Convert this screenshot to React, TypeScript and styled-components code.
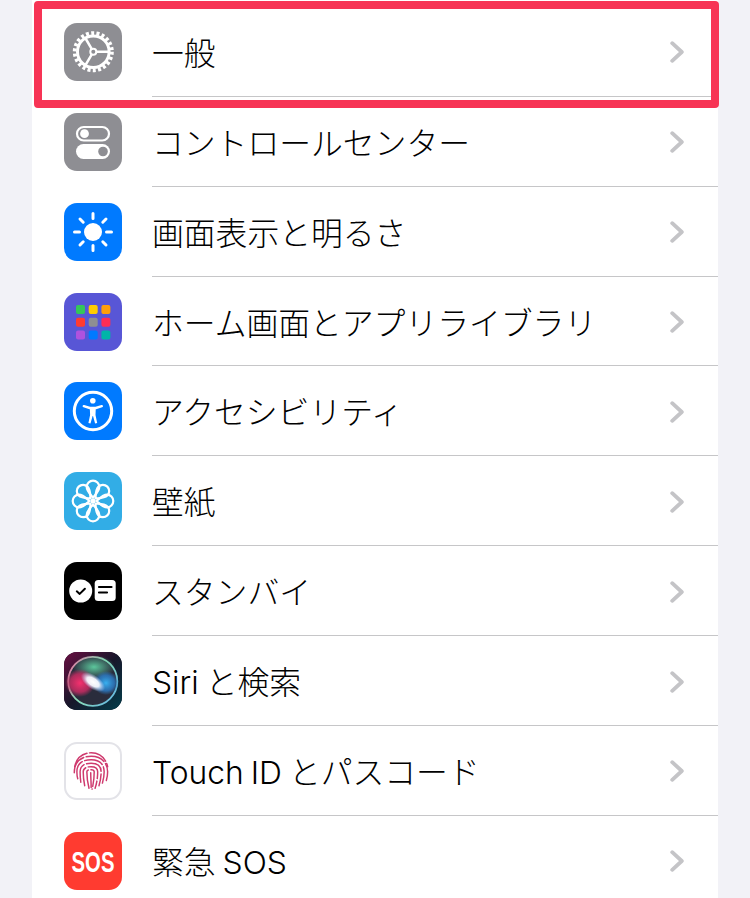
import React from "react";
import styled, { createGlobalStyle } from "styled-components";

const GlobalStyle = createGlobalStyle`
    html, body {
        margin: 0;
        padding: 0;
        background-color: #f2f2f7;
    }
    body {
        overflow: hidden;
    }
`;

const Page = styled.div`
    position: relative;
    width: 750px;
    height: 898px;
    padding: 0 32px;
    box-sizing: border-box;
    overflow: hidden;
    background-color: #f2f2f7;
`;

const Card = styled.div`
    display: flex;
    flex-direction: column;
    padding-top: 6.96px;
    background-color: #ffffff;
`;

const Row = styled.div`
    display: flex;
    flex: 0 0 auto;
    align-items: center;
    height: 89.88px;
    padding-left: 32px;
    box-sizing: border-box;
`;

const IconBox = styled.div<{ $bg: string; $bordered?: boolean }>`
    flex: 0 0 auto;
    width: 58px;
    height: 58px;
    border-radius: 13px;
    overflow: hidden;
    box-sizing: border-box;
    background: ${({ $bg }) => $bg};
    border: ${({ $bordered }) => ($bordered ? "2px solid #e3e3e8" : "none")};

    svg {
        display: block;
        width: 100%;
        height: 100%;
    }
`;

const RowBody = styled.div`
    flex: 1;
    display: flex;
    align-items: center;
    justify-content: space-between;
    align-self: stretch;
    margin-left: 30px;
    padding-right: 34px;
    border-bottom: 1px solid #c6c6c8;
`;

const Label = styled.span`
    padding-top: 5px;
    font-family: "Inter", "Noto Sans CJK JP", sans-serif;
    font-size: 31.8px;
    font-weight: 300;
    line-height: 1;
    word-spacing: -2px;
    color: #000000;
    white-space: nowrap;
`;

const Chevron = styled.svg`
    display: block;
    width: 14px;
    height: 22px;
    margin-top: 2px;
    fill: none;
    stroke: #c4c4c7;
    stroke-width: 3.8;
    stroke-linecap: round;
    stroke-linejoin: round;
`;

const Highlight = styled.div`
    position: absolute;
    left: 34px;
    top: 1px;
    width: 685px;
    height: 107px;
    box-sizing: border-box;
    border: 8px solid #f73455;
    border-radius: 4px;
    pointer-events: none;
`;

const GearIcon = () => (
    <svg viewBox="0 0 58 58" fill="none" stroke="#fff">
        <circle cx="29.3" cy="28.7" r="18.6" strokeWidth="3.8" strokeDasharray="3 2.31" />
        <circle cx="29.3" cy="28.7" r="15.8" strokeWidth="3" />
        <circle cx="29.3" cy="28.7" r="3" strokeWidth="2" />
        <path d="M32.300 28.700H45M27.800 31.300l-6.800 11.600M27.800 26.100l-6.800-11.600" strokeWidth="2.5" />
    </svg>
);

const SwitchesIcon = () => (
    <svg viewBox="0 0 58 58">
        <rect x="13" y="14" width="32" height="13.500" rx="6.750" fill="none" stroke="#fff" strokeWidth="2.200" />
        <circle cx="20.500" cy="20.700" r="4.400" fill="#fff" />
        <rect x="12" y="31" width="34" height="15" rx="7.500" fill="#fff" />
        <circle cx="39" cy="38.500" r="4.800" fill="#8e8e93" />
    </svg>
);

const SunIcon = () => (
    <svg viewBox="0 0 58 58">
        <circle cx="29" cy="29" r="9" fill="#fff" />
        <path
            d="M29 10.500v5M29 42.500v5M10.500 29h5M42.500 29h5M16 16l3.200 3.200M38.800 38.800L42 42M42 16l-3.200 3.200M19.200 38.800L16 42"
            stroke="#fff"
            strokeWidth="3"
            strokeLinecap="round"
        />
    </svg>
);

const GRID_COLORS = ["#34c759", "#ffcc00", "#ff9f0a", "#ff3b30", "#8e8e93", "#ff2d55", "#af52de", "#007aff", "#00b5a8"];

const GridIcon = () => (
    <svg viewBox="0 0 58 58">
        {GRID_COLORS.map((color, i) => (
            <rect
                key={color}
                x={12 + (i % 3) * 12.7}
                y={12 + Math.floor(i / 3) * 12.7}
                width="9"
                height="9"
                rx="2"
                fill={color}
            />
        ))}
    </svg>
);

const AccessIcon = () => (
    <svg viewBox="0 0 58 58">
        <circle cx="29" cy="29" r="18.700" fill="none" stroke="#fff" strokeWidth="3" />
        <circle cx="28.800" cy="18.700" r="2.800" fill="#fff" />
        <path d="M19.800 24.200l6 1.800h6l6-1.800" fill="none" stroke="#fff" strokeWidth="2.400" strokeLinecap="round" strokeLinejoin="round" />
        <path d="M25.800 25.500h6l-.3 7.500 1.700 8-2.100.4-2.100-7.400h-.4l-2.100 7.400-2.100-.4 1.700-8z" fill="#fff" />
    </svg>
);

const FlowerIcon = () => (
    <svg viewBox="0 0 58 58" fill="none" stroke="#fff" strokeWidth="2.200">
        {[0, 45, 90, 135, 180, 225, 270, 315].map((deg) => (
            <path
                key={deg}
                transform={`rotate(${deg} 29 29)`}
                d="M29 25.500C26.500 22.500 22.700 19 22.700 15A6.300 6.300 0 0 1 35.300 15C35.300 19 31.500 22.500 29 25.500Z"
            />
        ))}
        <circle cx="29" cy="29" r="2.500" fill="#fff" stroke="none" />
    </svg>
);

const StandbyIcon = () => (
    <svg viewBox="0 0 58 58">
        <circle cx="16.700" cy="29" r="11.500" fill="#fff" />
        <path d="M12.800 29.300l2.900 2.600 5.200-5.200" fill="none" stroke="#000" strokeWidth="2" strokeLinecap="round" strokeLinejoin="round" />
        <rect x="30.700" y="18" width="21" height="21" rx="3.500" fill="#fff" />
        <path d="M35 25h12.500M35 30.500h8" stroke="#000" strokeWidth="2.200" strokeLinecap="round" />
    </svg>
);

const SiriIcon = () => (
    <svg viewBox="0 0 58 58">
        <defs>
            <radialGradient id="siriPink">
                <stop offset="0" stopColor="#f5306e" />
                <stop offset="0.65" stopColor="#c42c62" stopOpacity="0.85" />
                <stop offset="1" stopColor="#c42c62" stopOpacity="0" />
            </radialGradient>
            <radialGradient id="siriBlue">
                <stop offset="0" stopColor="#38b0f0" />
                <stop offset="0.65" stopColor="#2c78c0" stopOpacity="0.85" />
                <stop offset="1" stopColor="#2c78c0" stopOpacity="0" />
            </radialGradient>
            <radialGradient id="siriGreen">
                <stop offset="0" stopColor="#5cc79c" />
                <stop offset="1" stopColor="#5cc79c" stopOpacity="0" />
            </radialGradient>
            <radialGradient id="siriCore">
                <stop offset="0" stopColor="#ffffff" />
                <stop offset="0.5" stopColor="#f6f9ff" stopOpacity="0.95" />
                <stop offset="1" stopColor="#b8d0ff" stopOpacity="0" />
            </radialGradient>
            <linearGradient id="siriRing" x1="0" y1="0.2" x2="1" y2="0.9">
                <stop offset="0" stopColor="#e07aa2" />
                <stop offset="0.45" stopColor="#8adcb8" />
                <stop offset="1" stopColor="#62b4e4" />
            </linearGradient>
            <linearGradient id="siriBg" x1="0" y1="0" x2="1" y2="1">
                <stop offset="0" stopColor="#6a0f42" />
                <stop offset="0.5" stopColor="#17172a" />
                <stop offset="1" stopColor="#033c4a" />
            </linearGradient>
        </defs>
        <rect width="58" height="58" fill="url(#siriBg)" />
        <circle cx="28.800" cy="29.300" r="24.500" fill="#2a2c3c" stroke="url(#siriRing)" strokeWidth="1.800" />
        <ellipse cx="30" cy="15" rx="21" ry="12" fill="url(#siriGreen)" />
        <ellipse cx="16" cy="31" rx="15" ry="14" fill="url(#siriPink)" />
        <ellipse cx="42" cy="31" rx="13" ry="12" fill="url(#siriBlue)" />
        <ellipse cx="29" cy="30" rx="14" ry="7" fill="url(#siriCore)" transform="rotate(35 29 30)" />
    </svg>
);

const FINGER_ARCS = [
    "M9 24C11 14 19 8 28 8s17 6 19 16",
    "M8.500 31c0-13 8.500-19 19.500-19s19 7 19 18c0 4-.5 7-1.500 10",
    "M12.500 38c-1-3-1-6-1-8 0-10 7-14 16.500-14S43 21 43 30c0 5-.8 9-2 13",
    "M16 42c-.5-4-.8-8-.8-12 0-7 5.300-10 12.800-10s11.500 4 11.500 10c0 6-1 11-2.500 16",
    "M20.500 46c-1-5-1.700-10-1.700-16 0-4 3.700-6 9.200-6s7.500 2.500 7.500 6c0 7-1 13-3 19",
    "M25.500 49c-1.500-6-2.500-12-2.500-19 0-1.800 2-2.500 5-2.500s3.500 1 3.500 2.500c0 7-.8 14-2.500 20",
    "M27.500 31c0 6 .5 12 .5 17",
];

const FingerprintIcon = () => (
    <svg viewBox="0 0 58 58">
        <g
            transform="translate(1 2) scale(0.93)"
            fill="none"
            stroke="#cf3a6e"
            strokeWidth="1.700"
            strokeLinecap="round"
            strokeDasharray="22 3"
        >
            {FINGER_ARCS.map((d) => (
                <path key={d} d={d} />
            ))}
        </g>
    </svg>
);

const SosIcon = () => (
    <svg viewBox="0 0 58 58">
        <text
            transform="translate(29 39.500) scale(0.7 1)"
            textAnchor="middle"
            fontFamily="'Liberation Sans', sans-serif"
            fontWeight="700"
            fontSize="29"
            fill="#fff"
        >
            SOS
        </text>
    </svg>
);

const ITEMS = [
    { label: "一般", bg: "#8e8e93", icon: <GearIcon /> },
    { label: "コントロールセンター", bg: "#8e8e93", icon: <SwitchesIcon /> },
    { label: "画面表示と明るさ", bg: "#007aff", icon: <SunIcon /> },
    { label: "ホーム画面とアプリライブラリ", bg: "#5856d6", icon: <GridIcon /> },
    { label: "アクセシビリティ", bg: "#007aff", icon: <AccessIcon /> },
    { label: "壁紙", bg: "#32ade6", icon: <FlowerIcon /> },
    { label: "スタンバイ", bg: "#000000", icon: <StandbyIcon /> },
    { label: "Siri と検索", bg: "#1a1a2a", icon: <SiriIcon /> },
    { label: "Touch ID とパスコード", bg: "#ffffff", icon: <FingerprintIcon />, bordered: true },
    { label: "緊急 SOS", bg: "#ff3b30", icon: <SosIcon /> },
];

const App: React.FC = () => {
    return (
        <>
            <GlobalStyle />
            <Page>
                <Card>
                    {ITEMS.map((item) => (
                        <Row key={item.label}>
                            <IconBox $bg={item.bg} $bordered={item.bordered}>
                                {item.icon}
                            </IconBox>
                            <RowBody>
                                <Label>{item.label}</Label>
                                <Chevron viewBox="0 0 14 22">
                                    <path d="M2.200 2.200L11.800 11l-9.600 8.800" />
                                </Chevron>
                            </RowBody>
                        </Row>
                    ))}
                </Card>
                <Highlight />
            </Page>
        </>
    );
};

export default App;
